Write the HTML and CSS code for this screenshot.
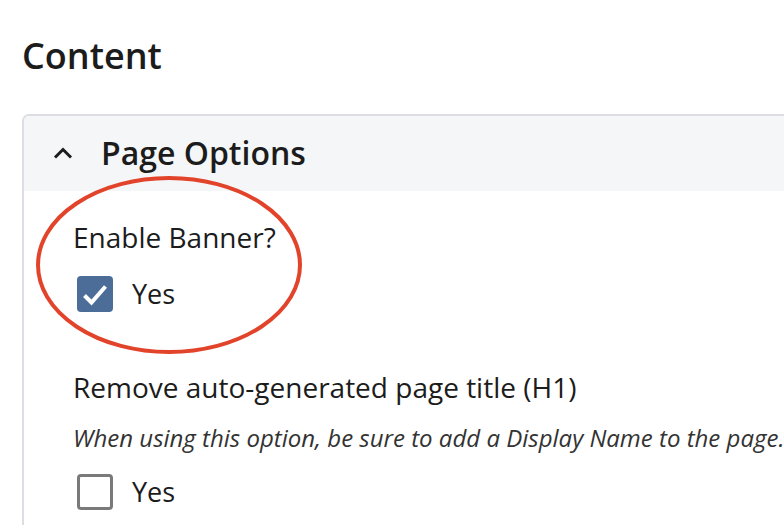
FILE: index.html
```html
<!DOCTYPE html>
<html>
<head>
<meta charset="utf-8">
<link rel="stylesheet" href="styles.css">
</head>
<body>
<div class="page">
  <h1 class="title">Content</h1>
  <section class="card">
    <div class="card-header">
      <svg class="chevron" width="20" height="12" viewBox="0 0 20 12"><path d="M2 10.5 L10 2.5 L18 10.5" fill="none" stroke="#1c1c1c" stroke-width="3"/></svg>
      <h2 class="card-title">Page Options</h2>
    </div>
    <div class="card-body">
      <div class="field first">
        <div class="label">Enable Banner?</div>
        <label class="option">
          <span class="box checked"><svg width="36" height="36" viewBox="0 0 36 36"><polyline points="7.5,19.5 14.5,26.5 28.5,10.5" fill="none" stroke="#fff" stroke-width="4"/></svg></span>
          <span class="option-text">Yes</span>
        </label>
      </div>
      <div class="field second">
        <div class="label">Remove auto-generated page title (H1)</div>
        <div class="help">When using this option, be sure to add a Display Name to the page.</div>
        <label class="option">
          <span class="box"></span>
          <span class="option-text">Yes</span>
        </label>
      </div>
      <svg class="annotation" width="280" height="190" viewBox="0 0 280 190"><ellipse cx="134" cy="89" rx="131" ry="87" fill="none" stroke="#e2442b" stroke-width="4"/></svg>
    </div>
  </section>
</div>
</body>
</html>
```

FILE: styles.css
```css
html, body {
  margin: 0;
  padding: 0;
  background: #ffffff;
  overflow: hidden;
}
body {
  font-family: "Open Sans", "Noto Sans", sans-serif;
  color: #1c1c1c;
}
.page {
  padding: 0 0 0 22px;
}
.title {
  margin: 0;
  padding-top: 31px;
  font-size: 36px;
  line-height: 49px;
  font-weight: 600;
  color: #1c1c1c;
}
.card {
  margin-top: 34px;
  width: 820px;
  border: 2px solid #dcdee3;
  border-radius: 7px;
  background: #fff;
}
.card-header {
  display: flex;
  align-items: center;
  gap: 28px;
  background: #f5f6f8;
  padding: 15px 0 16px 29px;
  border-radius: 5px 5px 0 0;
}
.chevron {
  display: block;
  flex: none;
}
.card-title {
  margin: 0;
  font-size: 32px;
  line-height: 44px;
  font-weight: 600;
  color: #1c1c1c;
}
.card-body {
  position: relative;
  padding: 27px 0 0 49px;
  height: 340px;
}
.field {
  display: flex;
  flex-direction: column;
}
.second {
  margin-top: 56px;
}
.label {
  font-size: 28px;
  line-height: 38px;
  color: #1c1c1c;
}
.help {
  margin-top: 16px;
  font-size: 24px;
  line-height: 32px;
  font-style: italic;
  color: #333;
  white-space: nowrap;
}
.option {
  display: flex;
  align-items: center;
  gap: 19px;
  padding-left: 4px;
}
.first .option {
  margin-top: 19px;
}
.help + .option {
  margin-top: 19px;
}
.box {
  width: 36px;
  height: 36px;
  box-sizing: border-box;
  border: 3px solid #7a7a7a;
  border-radius: 4px;
  flex: none;
  display: block;
}
.box svg {
  display: block;
}
.box.checked {
  border: none;
  background: #4b6d98;
}
.option-text {
  font-size: 27px;
  line-height: 37px;
  color: #1c1c1c;
}
.annotation {
  position: absolute;
  left: 11px;
  top: -15px;
}
```
